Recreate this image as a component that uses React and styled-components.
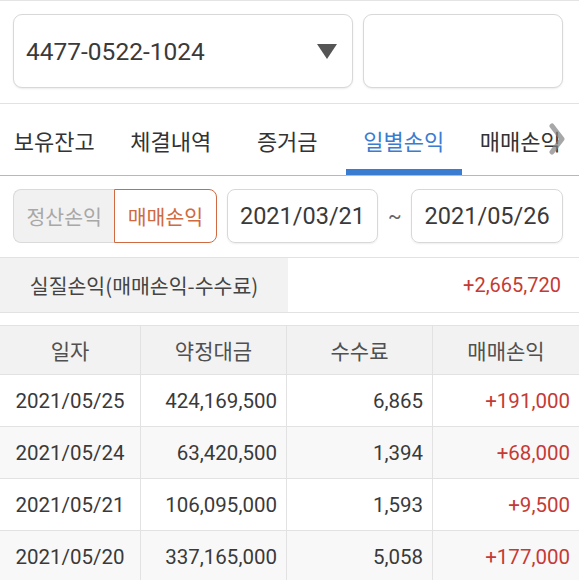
import React from 'react';
import styled, { createGlobalStyle } from 'styled-components';

const GlobalStyle = createGlobalStyle`
  body {
    margin: 0;
    background: #ffffff;
    font-family: Roboto, "Noto Sans CJK KR", sans-serif;
    color: #3a3a3a;
  }
`;

const Page = styled.div`
  width: 579px;
  height: 580px;
  overflow: hidden;
  border-top: 1px solid #e4e4e4;
  box-sizing: border-box;
`;

const TopBar = styled.div`
  display: flex;
  gap: 10px;
  padding: 13px 16px 15px 13px;
  border-bottom: 1px solid #e2e2e2;
`;

const Box = styled.div`
  box-sizing: border-box;
  height: 74px;
  width: ${(p) => p.width}px;
  border: 1px solid #d8d8d8;
  border-radius: 9px;
  box-shadow: 0 1px 2px rgba(0, 0, 0, 0.08);
  background: #fff;
  display: flex;
  align-items: center;
  justify-content: space-between;
  padding: 0 15px 0 12px;
  font-size: 24.5px;
  color: #3a3a3a;
`;

const Caret = styled.span`
  width: 0;
  height: 0;
  border-left: 10px solid transparent;
  border-right: 10px solid transparent;
  border-top: 15px solid #555;
`;

const TabBar = styled.div`
  position: relative;
  display: flex;
  height: 71px;
  border-bottom: 1px solid #9fbde2;
  margin-left: -4px;
`;

const Tab = styled.div`
  flex: 0 0 116.5px;
  display: flex;
  align-items: center;
  justify-content: center;
  font-size: 22px;
  font-family: "Noto Sans CJK KR", sans-serif;
  color: ${(p) => (p.active ? '#3a7cd0' : '#333')};
  box-shadow: ${(p) => (p.active ? 'inset 0 -6px 0 #3a7cd0' : 'none')};
`;

const MoreArrow = styled.svg`
  position: absolute;
  right: 14px;
  top: 19px;
`;

const FilterRow = styled.div`
  display: flex;
  align-items: center;
  padding: 13px 16px 0 13px;
`;

const Segmented = styled.div`
  display: flex;
  width: 204px;
  height: 54px;
  margin-right: 10px;
`;

const SegButton = styled.div`
  flex: 1;
  box-sizing: border-box;
  display: flex;
  align-items: center;
  justify-content: center;
  font-size: 20.5px;
  font-family: "Noto Sans CJK KR", sans-serif;
  background: ${(p) => (p.active ? '#fff' : '#f1f1f1')};
  color: ${(p) => (p.active ? '#cf6a42' : '#a8a8a8')};
  border: 1px solid ${(p) => (p.active ? '#cf6a42' : '#dadada')};
  border-radius: ${(p) => (p.active ? '0 8px 8px 0' : '8px 0 0 8px')};
  ${(p) => !p.active && 'border-right: none;'}
`;

const DateBox = styled.div`
  box-sizing: border-box;
  width: 152px;
  height: 54px;
  border: 1px solid #d8d8d8;
  border-radius: 8px;
  box-shadow: 0 1px 2px rgba(0, 0, 0, 0.07);
  display: flex;
  align-items: center;
  justify-content: center;
  font-size: 23.5px;
  color: #3a3a3a;
`;

const Tilde = styled.div`
  width: 33px;
  text-align: center;
  font-size: 20px;
  color: #666;
`;

const Summary = styled.div`
  display: flex;
  box-sizing: border-box;
  height: 56px;
  margin-top: 14px;
  border-top: 1px solid #e2e2e2;
  border-bottom: 1px solid #e2e2e2;
`;

const SummaryLabel = styled.div`
  width: 288px;
  background: #f2f2f2;
  display: flex;
  align-items: center;
  justify-content: center;
  font-size: 20.5px;
  font-family: "Noto Sans CJK KR", sans-serif;
  color: #444;
`;

const SummaryValue = styled.div`
  flex: 1;
  display: flex;
  align-items: center;
  justify-content: flex-end;
  padding-right: 18px;
  font-size: 20px;
  color: #c53a35;
`;

const Table = styled.div`
  margin-top: 12px;
  border-top: 1px solid #e2e2e2;
`;

const Row = styled.div`
  display: grid;
  grid-template-columns: 141px 146px 146px 146px;
  height: ${(p) => (p.head ? 49 : 52)}px;
  background: ${(p) => (p.head ? '#f2f2f2' : p.shade ? '#f8f8f8' : '#fff')};
  border-bottom: 1px solid #e2e2e2;
  box-sizing: border-box;
`;

const Cell = styled.div`
  display: flex;
  align-items: center;
  justify-content: ${(p) => (p.center ? 'center' : 'flex-end')};
  padding-right: ${(p) => (p.center ? 0 : 9)}px;
  border-right: 1px solid #e2e2e2;
  font-size: ${(p) => (p.head ? 21 : 20.5)}px;
  font-family: ${(p) => (p.head ? '"Noto Sans CJK KR", sans-serif' : 'Roboto, sans-serif')};
  color: ${(p) => (p.red ? '#c53a35' : p.head ? '#505050' : '#3a3a3a')};
  &:last-child {
    border-right: none;
  }
`;

const tabs = ['보유잔고', '체결내역', '증거금', '일별손익', '매매손익'];

const rows = [
  ['2021/05/25', '424,169,500', '6,865', '+191,000'],
  ['2021/05/24', '63,420,500', '1,394', '+68,000'],
  ['2021/05/21', '106,095,000', '1,593', '+9,500'],
  ['2021/05/20', '337,165,000', '5,058', '+177,000'],
];

export default function App() {
  return (
    <Page>
      <GlobalStyle />
      <TopBar>
        <Box width={340}>
          <span>4477-0522-1024</span>
          <Caret />
        </Box>
        <Box width={200} />
      </TopBar>
      <TabBar>
        {tabs.map((t) => (
          <Tab key={t} active={t === '일별손익'}>
            {t}
          </Tab>
        ))}
        <MoreArrow width="16" height="32" viewBox="0 0 16 32">
          <polyline
            points="3,3 13,16 3,29"
            fill="none"
            stroke="rgba(130,130,130,0.7)"
            strokeWidth="5"
            strokeLinejoin="round"
            strokeLinecap="round"
          />
        </MoreArrow>
      </TabBar>
      <FilterRow>
        <Segmented>
          <SegButton>정산손익</SegButton>
          <SegButton active>매매손익</SegButton>
        </Segmented>
        <DateBox>2021/03/21</DateBox>
        <Tilde>~</Tilde>
        <DateBox>2021/05/26</DateBox>
      </FilterRow>
      <Summary>
        <SummaryLabel>실질손익(매매손익-수수료)</SummaryLabel>
        <SummaryValue>+2,665,720</SummaryValue>
      </Summary>
      <Table>
        <Row head>
          <Cell head center>일자</Cell>
          <Cell head center>약정대금</Cell>
          <Cell head center>수수료</Cell>
          <Cell head center>매매손익</Cell>
        </Row>
        {rows.map((r, i) => (
          <Row key={r[0]} shade={i % 2 === 1}>
            <Cell center>{r[0]}</Cell>
            <Cell>{r[1]}</Cell>
            <Cell>{r[2]}</Cell>
            <Cell red>{r[3]}</Cell>
          </Row>
        ))}
      </Table>
    </Page>
  );
}
